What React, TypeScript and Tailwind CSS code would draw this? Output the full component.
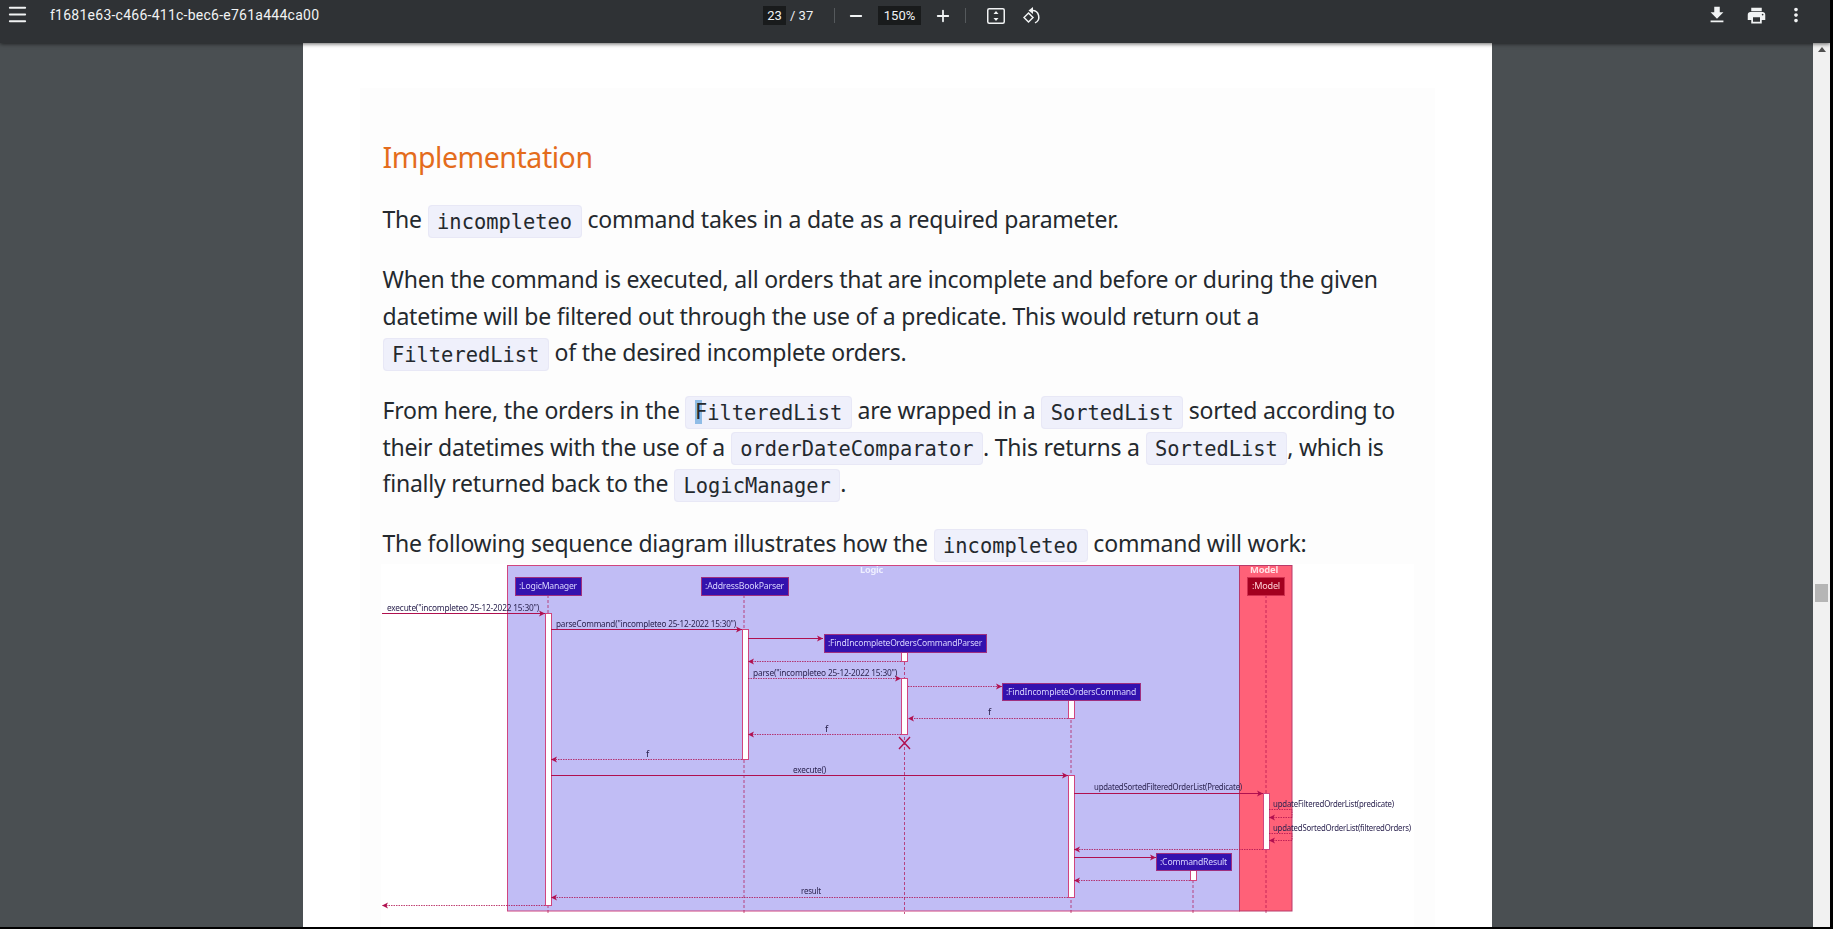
import { Menu, Minus, Plus } from 'lucide-react'
import { MdFileDownload, MdPrint, MdMoreVert } from 'react-icons/md'

const UI = "font-['Roboto',sans-serif]"
const BODY = "font-['Noto_Sans','Open_Sans',sans-serif]"

function Code({ children }: { children: React.ReactNode }) {
  return (
    <code className="rounded-[4px] border border-[#e8e8f6] bg-[#eff0fb] px-[8.5px] py-[3.5px] font-['DejaVu_Sans_Mono',monospace] text-[20.4px] leading-none tracking-normal text-[#24292e]">
      {children}
    </code>
  )
}

function Toolbar() {
  return (
    <header className={`${UI} relative z-10 flex h-[43px] shrink-0 items-start bg-[#2f3235] text-[#f1f3f4] shadow-[0_1px_4px_rgba(0,0,0,0.6)]`}>
      <Menu className="ml-[6px] mt-[3px] h-[23px] w-[23px]" strokeWidth={2} />
      <span className="ml-[21px] mt-[5px] w-[270px] whitespace-nowrap text-[14px] leading-[20px] tracking-[0.25px]">
        f1681e63-c466-411c-bec6-e761a444ca00
      </span>
      <div className="ml-[443px] mt-[6px] flex h-[19px] items-center text-[13px]">
        <span className="flex h-[19px] w-[23px] items-center justify-center bg-[#191b1c]">23</span>
        <span className="ml-[4px] w-[23px] whitespace-nowrap">/ 37</span>
        <span className="ml-[21px] h-[15px] w-px bg-[#55595c]" />
        <Minus className="ml-[12px] h-[18px] w-[18px]" strokeWidth={2.4} />
        <span className="ml-[13px] flex h-[19px] w-[43px] items-center justify-center bg-[#191b1c]">150%</span>
        <Plus className="ml-[13px] h-[18px] w-[18px]" strokeWidth={2.4} />
        <span className="ml-[13px] h-[15px] w-px bg-[#55595c]" />
        <svg className="ml-[21px] h-[16px] w-[18px]" viewBox="0 0 18 16" fill="none" stroke="currentColor" strokeWidth="1.5">
          <rect x="0.75" y="0.75" width="16.5" height="14.5" rx="1.5" />
          <path d="M9 3l2.5 3h-5zM9 13l2.5-3h-5z" fill="currentColor" stroke="none" />
        </svg>
        <svg className="ml-[18px] h-[17px] w-[18px]" viewBox="0 0 18 17" fill="none" stroke="currentColor" strokeWidth="1.5">
          <path d="M5.5 6l4.5 4.5-4.5 4.5L1 10.5z" />
          <path d="M9 3.5a6.5 6.5 0 0 1 3 12.4" />
          <path d="M10 0L5.5 3.5 10 7z" fill="currentColor" stroke="none" />
        </svg>
      </div>
      <MdFileDownload className="ml-[665px] mt-[4px] h-[22px] w-[22px]" />
      <MdPrint className="ml-[18px] mt-[5px] h-[21px] w-[21px]" />
      <MdMoreVert className="ml-[18px] mt-[4px] h-[22px] w-[22px]" />
    </header>
  )
}

type Msg = { x1: number; x2: number; y: number; dashed?: boolean }

const MESSAGES: Msg[] = [
  { x1: 382, x2: 545, y: 612 },
  { x1: 551, x2: 742, y: 628 },
  { x1: 748, x2: 823, y: 637 },
  { x1: 901, x2: 748, y: 660, dashed: true },
  { x1: 748, x2: 901, y: 677, dashed: true },
  { x1: 908, x2: 1002, y: 685, dashed: true },
  { x1: 1068, x2: 908, y: 717, dashed: true },
  { x1: 901, x2: 748, y: 733, dashed: true },
  { x1: 742, x2: 551, y: 758, dashed: true },
  { x1: 551, x2: 1068, y: 774 },
  { x1: 1074, x2: 1263, y: 792 },
  { x1: 1292, x2: 1269, y: 816, dashed: true },
  { x1: 1292, x2: 1269, y: 839, dashed: true },
  { x1: 1263, x2: 1074, y: 848, dashed: true },
  { x1: 1074, x2: 1156, y: 856 },
  { x1: 1190, x2: 1074, y: 879, dashed: true },
  { x1: 1068, x2: 551, y: 896, dashed: true },
  { x1: 545, x2: 382, y: 904, dashed: true },
]

const LABELS: [string, number, number, number][] = [
  ['execute("incompleteo 25-12-2022 15:30")', 387, 610, 152],
  ['parseCommand("incompleteo 25-12-2022 15:30")', 556, 626, 180],
  ['parse("incompleteo 25-12-2022 15:30")', 753, 675, 144],
  ['f', 988, 714, 3],
  ['f', 825, 731, 3],
  ['f', 646, 756, 3],
  ['execute()', 793, 772, 33],
  ['result', 801, 893, 20],
  ['updatedSortedFilteredOrderList(Predicate)', 1094, 789, 148],
  ['updateFilteredOrderList(predicate)', 1273, 806, 121],
  ['updatedSortedOrderList(filteredOrders)', 1273, 830, 138],
]

const BOXES: [string, number, number, number, number][] = [
  [':LogicManager', 515, 576, 66, 18],
  [':AddressBookParser', 701, 576, 87, 18],
  [':FindIncompleteOrdersCommandParser', 824, 633, 162, 18],
  [':FindIncompleteOrdersCommand', 1002, 682, 138, 17],
  [':CommandResult', 1156, 852, 75, 17],
]

const ACTIVATIONS: [number, number, number][] = [
  [545, 612, 904],
  [742, 628, 758],
  [901, 651, 660],
  [901, 677, 733],
  [1068, 699, 717],
  [1068, 774, 896],
  [1263, 792, 848],
  [1190, 869, 879],
]

const LIFELINES: [number, number, number][] = [
  [548, 594, 913],
  [744, 594, 913],
  [904.5, 651, 913],
  [1071, 699, 913],
  [1266, 594, 913],
  [1193, 869, 913],
]

const LINE = '#b0104f'

// the picture is a sequence diagram: coordinates are offset so they read as page pixels
function SequenceDiagram() {
  return (
    <svg
      className="-ml-[1.5px] mt-[2px] block bg-white blur-[0.35px]"
      width="1033"
      height="364"
      viewBox="381 563 1033 364"
      fontFamily="'Noto Sans', sans-serif"
    >
      <rect x="507.5" y="564.5" width="732" height="345.5" fill="#c1bdf5" stroke="#d0457f" />
      <rect x="1239.5" y="564.5" width="52.5" height="345.5" fill="#ff6178" stroke="#b83a6a" />
      <text x="860" y="572" textLength="23" lengthAdjust="spacingAndGlyphs" fontSize="9" fontWeight="bold" fill="#eeeeff">Logic</text>
      <text x="1250" y="572" textLength="28" lengthAdjust="spacingAndGlyphs" fontSize="9" fontWeight="bold" fill="#ffe3e6">Model</text>

      {LIFELINES.map(([x, y1, y2]) => (
        <line key={x} x1={x} x2={x} y1={y1} y2={y2} stroke={LINE} strokeOpacity="0.7" strokeDasharray="3 2" />
      ))}

      {ACTIVATIONS.map(([x, y1, y2]) => (
        <rect key={`${x}-${y1}`} x={x + 0.5} y={y1 + 0.5} width="6" height={y2 - y1} fill="#fff" stroke="#d0457f" />
      ))}

      {BOXES.map(([name, x, y, w, h]) => (
        <g key={name}>
          <rect x={x + 0.5} y={y + 0.5} width={w} height={h} fill="#3312ae" stroke="#a0307f" />
          <text
            x={x + 4}
            y={y + h / 2 + 3}
            textLength={w - 8}
            lengthAdjust="spacingAndGlyphs"
            fontSize="9"
            fill="#d8d4ff"
          >
            {name}
          </text>
        </g>
      ))}
      <rect x="1247.5" y="576.5" width="37" height="18" fill="#a3001f" stroke="#d0304f" />
      <text x="1252" y="588" textLength="28" lengthAdjust="spacingAndGlyphs" fontSize="9" fill="#ffd0d6">:Model</text>

      {MESSAGES.map((m) => {
        const dir = m.x2 > m.x1 ? 1 : -1
        return (
          <g key={`${m.x1}-${m.y}`}>
            <line
              x1={m.x1}
              x2={m.x2}
              y1={m.y + 0.5}
              y2={m.y + 0.5}
              stroke={LINE}
              strokeWidth={m.dashed ? 0.8 : 1}
              strokeDasharray={m.dashed ? '1.5 1' : undefined}
            />
            <path
              d={`M${m.x2} ${m.y + 0.5}l${-dir * 6} -3l${dir * 1.5} 3l${-dir * 1.5} 3z`}
              fill={LINE}
            />
          </g>
        )
      })}

      {/* self calls on the model */}
      <path d="M1269 808.5h23v8M1269 832.5h23v7" fill="none" stroke={LINE} strokeWidth="0.8" strokeDasharray="1.5 1" />

      <path d="M899 736l11 12M910 736l-11 12" stroke={LINE} strokeWidth="1.4" />

      {LABELS.map(([text, x, y, w]) => (
        <text
          key={`${text}-${y}`}
          x={x}
          y={y}
          textLength={w}
          lengthAdjust="spacingAndGlyphs"
          fontSize="9"
          fill="#2c2450"
        >
          {text}
        </text>
      ))}
    </svg>
  )
}

function Document() {
  return (
    <article className={`${BODY} ml-[303px] h-[884px] w-[1189px] shrink-0 overflow-hidden bg-white pl-[57px] pt-[45px]`}>
      <div className="w-[1075px] bg-[#fdfdfd] pl-[22.5px] pt-[49px] text-[23px] leading-[36.5px] tracking-[-0.22px] text-[#24292e]">
        <h2 className="text-[28.5px] leading-[40px] tracking-[-0.45px] text-[#e46c1c]">Implementation</h2>
        <p className="mt-[24px] whitespace-nowrap">
          The <Code>incompleteo</Code> command takes in a date as a required parameter.
        </p>
        <p className="mt-[23.5px] whitespace-nowrap">
          When the command is executed, all orders that are incomplete and before or during the given
          <br />
          datetime will be filtered out through the use of a predicate. This would return out a
          <br />
          <Code>FilteredList</Code> of the desired incomplete orders.
        </p>
        <p className="mt-[21.5px] whitespace-nowrap">
          From here, the orders in the{' '}
          <Code>
            <span className="bg-[linear-gradient(90deg,#8fbce6_60%,transparent_60%)]">F</span>ilteredList
          </Code>{' '}
          are wrapped in a <Code>SortedList</Code> sorted according to
          <br />
          their datetimes with the use of a <Code>orderDateComparator</Code>. This returns a <Code>SortedList</Code>, which is
          <br />
          finally returned back to the <Code>LogicManager</Code>.
        </p>
        <p className="mt-[23.5px] whitespace-nowrap">
          The following sequence diagram illustrates how the <Code>incompleteo</Code> command will work:
        </p>
        <SequenceDiagram />
      </div>
    </article>
  )
}

export default function App() {
  return (
    <div className="flex h-[929px] w-[1833px] flex-col overflow-hidden border-b-2 border-r-[3px] border-black bg-[#4a4f52]">
      <Toolbar />
      <div className="flex min-h-0 flex-1">
        <Document />
        <div className="ml-[321px] flex w-[17px] shrink-0 flex-col items-center bg-[#f1f1f1]">
          <span className="mt-[4px] h-0 w-0 border-x-[4px] border-b-[5px] border-x-transparent border-b-[#505050]" />
          <span className="mt-[532px] h-[18px] w-[13px] bg-[#b5b5b5]" />
        </div>
      </div>
    </div>
  )
}
